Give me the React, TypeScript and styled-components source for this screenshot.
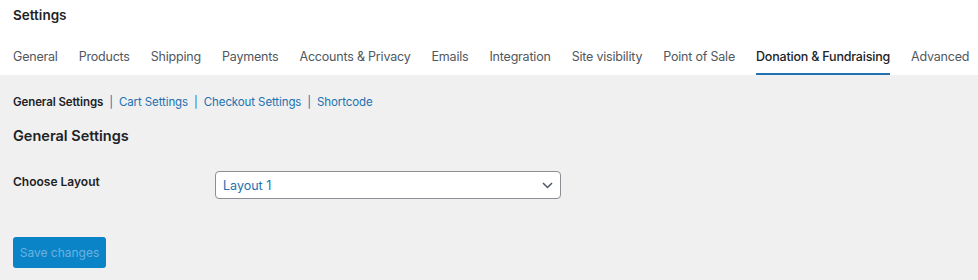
import React, { useState } from 'react';
import styled, { createGlobalStyle } from 'styled-components';

const GlobalStyle = createGlobalStyle`
  html, body {
    margin: 0;
    padding: 0;
    background: #f0f0f0;
    font-family: Inter, "Noto Sans", sans-serif;
    -webkit-font-smoothing: antialiased;
  }
`;

const TopBar = styled.div`
  background: #fff;
  padding: 0 13px;
`;

const Title = styled.h1`
  margin: 0;
  padding-top: 7px;
  font-size: 13.5px;
  font-weight: 600;
  color: #1d2327;
  line-height: 16px;
`;

const Tabs = styled.nav`
  display: flex;
  gap: 21px;
  margin-top: 17px;
`;

const Tab = styled.a<{ active?: boolean }>`
  display: block;
  font-size: 12.5px;
  letter-spacing: -0.2px;
  line-height: 20px;
  padding: 7px 0 6px;
  color: ${p => (p.active ? '#1d2327' : '#50575e')};
  font-weight: ${p => (p.active ? 500 : 400)};
  border-bottom: 2px solid ${p => (p.active ? '#2271b1' : 'transparent')};
  text-decoration: none;
  white-space: nowrap;
  cursor: pointer;
`;

const Content = styled.div`
  padding: 19px 13px 12px;
`;

const SubNav = styled.div`
  display: flex;
  align-items: center;
  font-size: 11.5px;
  letter-spacing: -0.1px;
  line-height: 16px;
  color: #2271b1;
`;

const SubLink = styled.a<{ current?: boolean }>`
  color: ${p => (p.current ? '#1d2327' : '#2271b1')};
  font-weight: ${p => (p.current ? 600 : 400)};
  text-decoration: none;
  cursor: pointer;
`;

const Sep = styled.span`
  color: #2271b1;
  padding: 0 6px;
`;

const SectionTitle = styled.h2`
  margin: 16px 0 0;
  font-size: 14.5px;
  font-weight: 600;
  color: #1d2327;
  line-height: 20px;
`;

const FormRow = styled.div`
  display: grid;
  grid-template-columns: 202px 346px;
  align-items: start;
  margin-top: 25px;
`;

const Label = styled.label`
  font-size: 12px;
  font-weight: 600;
  color: #1d2327;
  line-height: 16px;
  padding-top: 3px;
`;

const SelectWrap = styled.div`
  position: relative;
`;

const Select = styled.select`
  appearance: none;
  -webkit-appearance: none;
  width: 100%;
  height: 28px;
  box-sizing: border-box;
  border: 1px solid #8c8f94;
  border-radius: 4px;
  background: #fff;
  color: #2271b1;
  font-family: inherit;
  font-size: 12.5px;
  padding: 0 24px 0 7px;
  outline: none;
`;

const Chevron = styled.svg`
  position: absolute;
  right: 8px;
  top: 11px;
  pointer-events: none;
`;

const SaveButton = styled.button`
  margin-top: 38px;
  width: 93px;
  height: 31px;
  border: none;
  border-radius: 3px;
  background: #0a84c6;
  color: #6bb2e1;
  font-family: inherit;
  font-size: 12px;
  cursor: default;
`;

const tabs = [
  'General',
  'Products',
  'Shipping',
  'Payments',
  'Accounts & Privacy',
  'Emails',
  'Integration',
  'Site visibility',
  'Point of Sale',
  'Donation & Fundraising',
  'Advanced',
];

const subLinks = ['General Settings', 'Cart Settings', 'Checkout Settings', 'Shortcode'];

const App: React.FC = () => {
  const [layout, setLayout] = useState('layout1');

  return (
    <>
      <GlobalStyle />
      <TopBar>
        <Title>Settings</Title>
        <Tabs>
          {tabs.map(t => (
            <Tab key={t} active={t === 'Donation & Fundraising'}>
              {t}
            </Tab>
          ))}
        </Tabs>
      </TopBar>
      <Content>
        <SubNav>
          {subLinks.map((s, i) => (
            <React.Fragment key={s}>
              {i > 0 && <Sep>|</Sep>}
              <SubLink current={i === 0}>{s}</SubLink>
            </React.Fragment>
          ))}
        </SubNav>
        <SectionTitle>General Settings</SectionTitle>
        <FormRow>
          <Label>Choose Layout</Label>
          <SelectWrap>
            <Select value={layout} onChange={e => setLayout(e.target.value)}>
              <option value="layout1">Layout 1</option>
              <option value="layout2">Layout 2</option>
            </Select>
            <Chevron width="11" height="7" viewBox="0 0 11 7">
              <path d="M1 1l4.5 4.5L10 1" fill="none" stroke="#50575e" strokeWidth="1.5" />
            </Chevron>
          </SelectWrap>
        </FormRow>
        <SaveButton disabled>Save changes</SaveButton>
      </Content>
    </>
  );
};

export default App;
